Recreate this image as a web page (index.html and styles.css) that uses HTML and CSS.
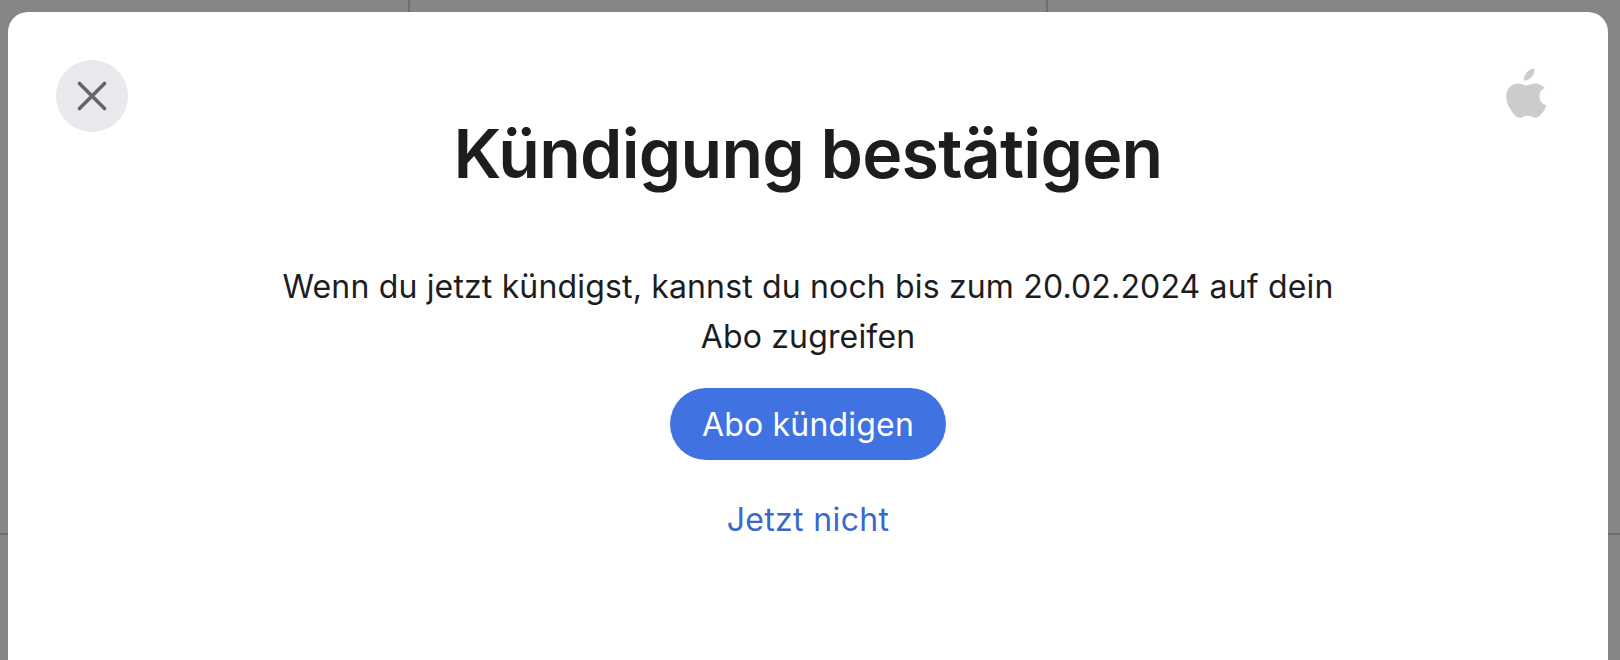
FILE: index.html

```html
<!DOCTYPE html>
<html lang="de">
<head>
  <meta charset="UTF-8">
  <meta name="viewport" content="width=device-width, initial-scale=1">
  <title>Kündigung bestätigen</title>
  <link rel="stylesheet" href="styles.css">
</head>
<body>

<div class="backdrop">
  <div class="backdrop-lines">
    <div class="backdrop-cell"></div>
    <div class="backdrop-cell"></div>
    <div class="backdrop-cell"></div>
  </div>
</div>

<div class="modal">
  <div class="modal-top">
    <button class="close-btn" aria-label="Schließen">
      <svg width="30" height="30" viewBox="0 0 30 30">
        <path d="M2.5 2.5 L27.5 27.500 M27.500 2.500 L2.500 27.500" stroke="#666668" stroke-width="3.600" stroke-linecap="round" fill="none"/>
      </svg>
    </button>
    <svg class="apple-logo" width="42" height="50" viewBox="0 0 42 50">
      <path fill="#cccccc" d="M29.500 0.500c0.300 3.400-1 6.300-2.900 8.500-2 2.300-4.700 3.800-7.700 3.600-0.400-3.200 1.200-6.300 3-8.300 2-2.200 5.200-3.700 7.600-3.800z"/>
      <path fill="#cccccc" d="M41.500 37.500c-1.100 2.500-1.600 3.600-3 5.800-2 3-4.700 6.300-8 6.300-3 0-3.700-1.900-7.800-1.900-4 0-4.900 2-7.900 2-3.300 0-5.900-3.200-7.800-6.200C0.600 35.300-0.600 25.800 3.600 20.300c2.300-3 5.800-4.700 9.300-4.700 3.500 0 5.700 1.900 8.500 1.900 2.800 0 5-1.900 9-1.900 3.100 0 6.800 1.700 9.100 4.500-7.600 4.100-6.300 14.700 2 17.400z"/>
    </svg>
  </div>

  <h1 class="modal-title">Kündigung bestätigen</h1>
  <p class="modal-text">Wenn du jetzt kündigst, kannst du noch bis zum 20.02.2024 auf dein Abo zugreifen</p>
  <button class="primary-btn">Abo kündigen</button>
  <a class="link-btn" href="#">Jetzt nicht</a>
</div>

</body>
</html>
```

FILE: styles.css

```css
html, body {
  margin: 0;
  height: 100%;
  overflow: hidden;
}
body {
  font-family: 'Inter', sans-serif;
  background-color: #868686;
  padding: 12px 12px 0 8px;
  box-sizing: border-box;
}
.backdrop {
  position: absolute;
  top: 0;
  left: 0;
  right: 0;
  bottom: 0;
}
.backdrop-lines {
  display: grid;
  grid-template-columns: 410px 638px 1fr;
  height: 533px;
  border-bottom: 2px solid #6e6e6e;
}
.backdrop-cell {
  border-right: 2px solid #6e6e6e;
  box-sizing: border-box;
}
.backdrop-cell:last-child {
  border-right: none;
}
.modal {
  position: relative;
  background: #ffffff;
  border-radius: 20px 20px 0 0;
  height: 100%;
  display: flex;
  flex-direction: column;
  align-items: center;
  box-sizing: border-box;
  padding: 48px 48px 0;
}
.modal-top {
  align-self: stretch;
  display: flex;
  justify-content: space-between;
  align-items: flex-start;
  height: 72px;
  margin-bottom: -17px;
}
.close-btn {
  width: 72px;
  height: 72px;
  border: none;
  border-radius: 50%;
  background: #e8e8ed;
  padding: 0;
  display: flex;
  align-items: center;
  justify-content: center;
}
.apple-logo {
  margin: 8px 13px 0 0;
}
.modal-title {
  margin: 0;
  font-size: 68px;
  line-height: 76px;
  font-weight: 600;
  letter-spacing: -0.75px;
  color: #1d1d1f;
}
.modal-text {
  margin: 71px 0 0;
  width: 1060px;
  text-align: center;
  font-size: 32px;
  line-height: 50px;
  letter-spacing: 0.16px;
  color: #1d1d1f;
}
.primary-btn {
  margin-top: 26px;
  width: 276px;
  height: 72px;
  border: none;
  border-radius: 36px;
  background: #4172e1;
  color: #ffffff;
  font-family: inherit;
  font-size: 32px;
  letter-spacing: 0.2px;
}
.link-btn {
  margin-top: 38px;
  font-size: 32px;
  line-height: 44px;
  letter-spacing: 0.35px;
  color: #3a69cc;
  text-decoration: none;
}
```
